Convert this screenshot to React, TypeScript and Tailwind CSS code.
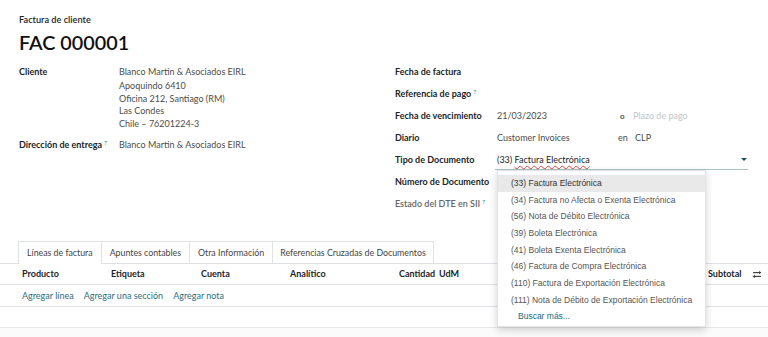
import React from "react";

const Q = () => <sup className="text-[6.5px] text-[#017e84] ml-[2px] font-normal">?</sup>;

export default function App() {
  const items = [
    "(33) Factura Electrónica",
    "(34) Factura no Afecta o Exenta Electrónica",
    "(56) Nota de Débito Electrónica",
    "(39) Boleta Electrónica",
    "(41) Boleta Exenta Electrónica",
    "(46) Factura de Compra Electrónica",
    "(110) Factura de Exportación Electrónica",
    "(111) Nota de Débito de Exportación Electrónica",
  ];
  return (
    <div className="relative w-[768px] h-[337px] overflow-hidden bg-white text-[#212529] text-[9px] whitespace-nowrap font-['Lato','Noto_Sans',sans-serif]">
      <div className="px-[19px] pt-[13px]">
        <div className="text-[9.2px] font-semibold leading-[14px]">Factura de cliente</div>
        <div className="text-[19.8px] font-semibold leading-[28px] mt-[1px] text-[#111]">FAC 000001</div>
      </div>
      <div className="flex mt-[8px]">
        <div className="w-[395px] pl-[19px]">
          <div className="flex">
            <div className="w-[100px] font-bold h-[16px] leading-[16px]">Cliente</div>
            <div className="text-[#4c4c4c]">
              <div className="h-[16px] leading-[16px]">Blanco Martin &amp; Asociados EIRL</div>
              <div className="leading-[12.7px] text-[#4c4c4c]">
                <div>Apoquindo 6410</div>
                <div>Oficina 212, Santiago (RM)</div>
                <div>Las Condes</div>
                <div>Chile – 76201224-3</div>
              </div>
            </div>
          </div>
          <div className="flex mt-[6px]">
            <div className="w-[100px] font-bold h-[16px] leading-[16px]">
              Dirección de entrega<Q />
            </div>
            <div className="text-[#4c4c4c] h-[16px] leading-[16px]">Blanco Martin &amp; Asociados EIRL</div>
          </div>
        </div>
        <div className="flex-1 flex flex-col">
          <div className="flex h-[22px] -mt-[3px] items-center">
            <div className="w-[102px] font-bold">Fecha de factura</div>
          </div>
          <div className="flex h-[22px] items-center">
            <div className="w-[102px] font-bold">Referencia de pago<Q /></div>
          </div>
          <div className="flex h-[22px] items-center">
            <div className="w-[102px] font-bold">Fecha de vencimiento</div>
            <div className="w-[123px] text-[#4c4c4c]">21/03/2023</div>
            <div className="text-[#4c4c4c] font-bold w-[13px] text-[8px]">o</div>
            <div className="text-[#c0c4c8]">Plazo de pago</div>
          </div>
          <div className="flex h-[22px] items-center">
            <div className="w-[102px] font-bold">Diario</div>
            <div className="w-[121px] text-[#4c4c4c]">Customer Invoices</div>
            <div className="w-[17px] text-[#4c4c4c]">en</div>
            <div className="text-[#4c4c4c]">CLP</div>
          </div>
          <div className="flex h-[22px] items-center">
            <div className="w-[100px] font-bold">Tipo de Documento</div>
            <div className="relative w-[253px] h-[20px] border-b border-[#a9c3c8] flex items-center pl-[2px] pt-[1px]">
              <span className="text-[#212529]">
                (33){" "}
                <span className="underline decoration-wavy decoration-[#e04040] decoration-[1px] underline-offset-[2px]">Factura Electrónica</span>
              </span>
              <span className="absolute right-[1px] top-[8px] w-0 h-0 border-l-[3px] border-r-[3px] border-t-[3px] border-l-transparent border-r-transparent border-t-[#1a4d5c]" />
            </div>
          </div>
          <div className="flex h-[22px] items-center">
            <div className="w-[102px] font-bold">Número de Documento</div>
          </div>
          <div className="flex h-[22px] items-center">
            <div className="w-[102px] font-semibold text-[#666]">Estado del DTE en SII<Q /></div>
          </div>
        </div>
      </div>

      <div className="absolute left-0 right-0 top-[241px]">
        <div className="flex pl-[18px] border-b border-[#dee2e6] h-[23px] text-[8.8px]">
          <div className="px-[8px] border border-b-0 border-[#dee2e6] bg-white -mb-px h-[23px] flex items-center text-[#444]">Líneas de factura</div>
          <div className="px-[8px] border-t border-r border-[#dee2e6] h-[22px] flex items-center text-[#444]">Apuntes contables</div>
          <div className="px-[8px] border-t border-r border-[#dee2e6] h-[22px] flex items-center text-[#444]">Otra Información</div>
          <div className="px-[7px] border-t border-r border-[#dee2e6] h-[22px] flex items-center text-[#444]">Referencias Cruzadas de Documentos</div>
        </div>
        <div className="flex items-center h-[21px] border-b border-[#dee2e6] font-bold">
          <div className="w-[111px] pl-[22px]">Producto</div>
          <div className="w-[90px]">Etiqueta</div>
          <div className="w-[89px]">Cuenta</div>
          <div className="w-[109px]">Analítico</div>
          <div className="w-[40px]">Cantidad</div>
          <div className="flex-1">UdM</div>
          <div className="w-[44px]">Subtotal</div>
          <div className="w-[16px] flex items-center">
            <svg width="10" height="9" viewBox="0 0 10 9" fill="#444">
              <rect x="1" y="2" width="6" height="1.2" />
              <path d="M7 0.9 L9.5 2.6 L7 4.3z" />
              <rect x="3" y="5.8" width="6" height="1.2" />
              <path d="M3 4.7 L0.5 6.4 L3 8.1z" />
            </svg>
          </div>
        </div>
        <div className="flex items-center h-[22px] border-b border-[#dee2e6] pl-[22px] gap-[10px] text-[#2d6e80]">
          <span>Agregar línea</span>
          <span>Agregar una sección</span>
          <span>Agregar nota</span>
        </div>
        <div className="h-[21px] border-b border-[#e6e9ec]" />
        <div className="h-[20px] bg-[#fbfbfb]" />
      </div>

      <div className="absolute left-[497px] top-[170px] w-[209px] h-[157px] bg-white border border-[#e4e4e4] shadow-[0_3px_8px_rgba(0,0,0,0.18)] pt-[4px] font-['Liberation_Sans',Arial,sans-serif] text-[8.5px] text-[#555]">
        {items.map((t, i) => (
          <div key={t} className={`h-[16.7px] flex items-center pl-[13px] ${i === 0 ? "bg-[#e9e9e9] text-[#333]" : ""}`}>{t}</div>
        ))}
        <div className="h-[16.7px] flex items-center pl-[20px] text-[#1a6a80]">Buscar más...</div>
      </div>
    </div>
  );
}
